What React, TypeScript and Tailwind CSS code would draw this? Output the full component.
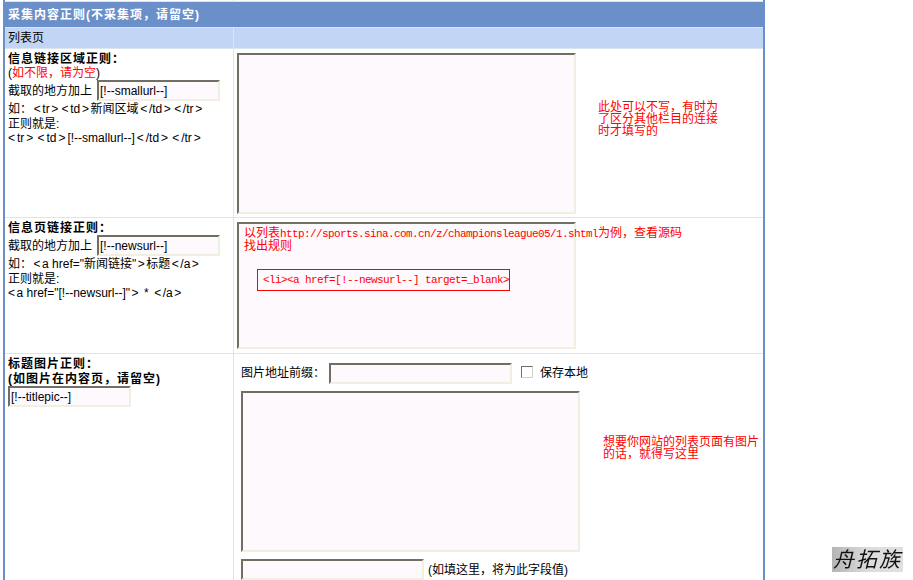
const cjk = "font-['Liberation_Sans','Noto_Sans_CJK_SC',sans-serif]";

function Field({ value = "", w }: { value?: string; w: string }) {
  return (
    <input
      readOnly
      value={value}
      className={`${w} h-[21px] bg-[#fdf9fd] border-2 border-t-[#716f64] border-l-[#716f64] border-r-[#f1efe2] border-b-[#f1efe2] px-px text-[12px] text-black outline-none ${cjk}`}
    />
  );
}

function Area({ w, h }: { w: string; h: string }) {
  return (
    <textarea
      readOnly
      className={`${w} ${h} block resize-none bg-[#fdf9fd] border-2 border-t-[#716f64] border-l-[#716f64] border-r-[#f1efe2] border-b-[#f1efe2] outline-none`}
    />
  );
}

function Note({ className, lines }: { className: string; lines: string[] }) {
  return (
    <div className={`absolute text-[12px] leading-[12px] text-[#ff0000] whitespace-nowrap ${className}`}>
      {lines.map((l) => (
        <div key={l}>{l}</div>
      ))}
    </div>
  );
}

function B({ c }: { c: string }) {
  return <span className="mx-[1.5px]">{c}</span>;
}

function M({ c }: { c: string }) {
  return <span className="mx-[1.65px]">{c}</span>;
}

function T({ c }: { c: string }) {
  return <span className="mx-[2px]">{c}</span>;
}

export default function App() {
  return (
    <div className={`relative w-[913px] h-[580px] overflow-hidden bg-white text-[12px] leading-[14px] text-black ${cjk}`}>
      <div className="ml-[3px] w-[762px] h-[580px] border-x-2 border-x-[#6b8fc8] bg-[#dbe5f0] flex flex-col gap-px">
        <div className="h-px shrink-0 flex gap-px">
          <div className="w-[228px] bg-white" />
          <div className="flex-1 bg-white" />
        </div>
        <div className="h-[25px] shrink-0 bg-[#6b8fc8] flex items-center px-[3px] font-bold tracking-[1px] text-[12px] text-white">
          采集内容正则(不采集项，请留空)
        </div>
        <div className="h-[20px] shrink-0 flex gap-px">
          <div className="w-[228px] bg-[#c3d5f5] flex items-center px-[3px]">列表页</div>
          <div className="flex-1 bg-[#c3d5f5]" />
        </div>

        <div className="h-[168px] shrink-0 flex gap-px">
          <div className="w-[228px] bg-white px-[3px] pt-[3px]">
            <div className="font-bold tracking-[1px]">信息链接区域正则：</div>
            <div>
              (<span className="text-[#ff0000]">如不限，请为空</span>)
            </div>
            <div className="flex items-center gap-[5px] h-[21px]">
              <span>截取的地方加上</span>
              <Field value="[!--smallurl--]" w="w-[123px]" />
            </div>
            <div className="mt-px whitespace-nowrap">
              如：<M c="<" />tr<M c=">" /><M c="<" />td<M c=">" />新闻区域<M c="<" />/td<M c=">" /><M c="<" />/tr<M c=">" />
            </div>
            <div className="mt-px">正则就是:</div>
            <div className="whitespace-nowrap -ml-[2px]">
              <T c="<" />tr<T c=">" /><T c="<" />td<T c=">" />[!--smallurl--]<T c="<" />/td<T c=">" /><T c="<" />/tr<T c=">" />
            </div>
          </div>
          <div className="flex-1 bg-white pl-[3px] pt-[4px]">
            <Area w="w-[339px]" h="h-[161px]" />
          </div>
        </div>

        <div className="h-[135px] shrink-0 flex gap-px">
          <div className="w-[228px] bg-white px-[3px] pt-[3px]">
            <div className="font-bold tracking-[1px]">信息页链接正则：</div>
            <div className="flex items-center gap-[5px] h-[21px]">
              <span>截取的地方加上</span>
              <Field value="[!--newsurl--]" w="w-[123px]" />
            </div>
            <div className="mt-px whitespace-nowrap">
              如：<B c="<" />a href="新闻链接"<B c=">" />标题<B c="<" />/a<B c=">" />
            </div>
            <div className="mt-px">正则就是:</div>
            <div className="whitespace-nowrap -ml-[1.5px]">
              <B c="<" />a href="[!--newsurl--]"<B c=">" /><span className="mx-[4px]">*</span><B c="<" />/a<B c=">" />
            </div>
          </div>
          <div className="flex-1 bg-white pl-[3px] pt-[4px]">
            <Area w="w-[339px]" h="h-[127px]" />
          </div>
        </div>

        <div className="flex-1 flex gap-px">
          <div className="w-[228px] bg-white px-[3px] pt-[3px]">
            <div className="font-bold tracking-[1px]">标题图片正则：</div>
            <div className="font-bold tracking-[1px] mt-px">(如图片在内容页，请留空)</div>
            <Field value="[!--titlepic--]" w="w-[123px]" />
          </div>
          <div className="flex-1 bg-white pl-[7px] pt-[8px]">
            <div className="flex items-center h-[22px]">
              <span className="w-[88px]">图片地址前缀：</span>
              <Field w="w-[183px]" />
              <span className="ml-[9px] w-[12px] h-[12px] border border-t-[#716f64] border-l-[#716f64] border-r-[#d4d0c8] border-b-[#d4d0c8] bg-white mb-[3px]" />
              <span className="ml-[7px]">保存本地</span>
            </div>
            <div className="mt-[7px]">
              <Area w="w-[339px]" h="h-[161px]" />
            </div>
            <div className="mt-[7px] flex items-center">
              <Field w="w-[183px]" />
              <span className="ml-[4px]">(如填这里，将为此字段值)</span>
            </div>
          </div>
        </div>
      </div>

      <Note className="left-[598px] top-[101px]" lines={["此处可以不写，有时为", "了区分其他栏目的连接", "时才填写的"]} />
      <div className="absolute left-[244px] top-[227px] text-[12px] leading-[12px] text-[#ff0000] whitespace-nowrap">
        <div>
          以列表<span className="font-['Liberation_Mono',monospace] text-[11px] tracking-[-0.6px]">http://sports.sina.com.cn/z/championsleague05/1.shtml</span>为例，查看源码
        </div>
        <div>找出规则</div>
      </div>
      <div className="absolute left-[257px] top-[269px] w-[253px] h-[22px] border border-[#ff0000] pl-[5px] flex items-center font-['Liberation_Mono',monospace] text-[11px] tracking-[-0.6px] text-[#ff0000] whitespace-nowrap">
        &lt;li&gt;&lt;a href=[!--newsurl--] target=_blank&gt;
      </div>
      <Note className="left-[603px] top-[436px]" lines={["想要你网站的列表页面有图片", "的话，就得写这里"]} />

      <div className="absolute left-[832px] top-[547px] w-[71px] h-[25px] bg-gradient-to-r from-[#b4b4b4] via-[#dcdcdc] to-[#e0e0e0] flex items-center justify-center text-[21px] tracking-[2px] italic text-[#111] blur-[0.4px] whitespace-nowrap">
        舟拓族
      </div>
    </div>
  );
}
